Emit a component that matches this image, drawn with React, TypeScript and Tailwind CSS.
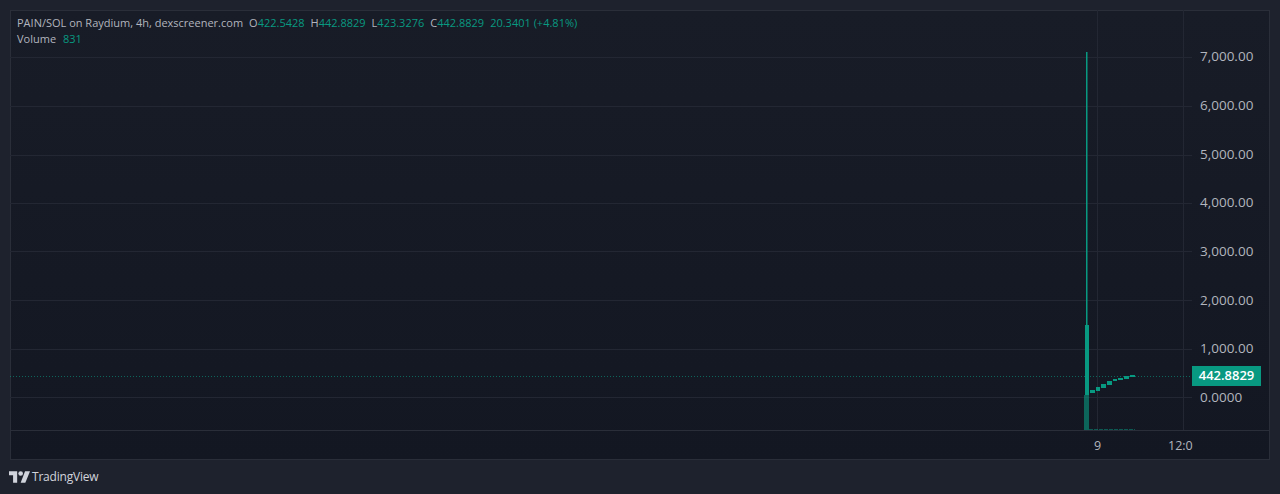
const PRICES = ["7,000.00", "6,000.00", "5,000.00", "4,000.00", "3,000.00", "2,000.00", "1,000.00", "0.0000"];

// y of the horizontal grid lines inside the plot (plot top is 0)
const GRID_Y = [47.5, 96.5, 145.5, 193.5, 241.5, 290.5, 339.5, 387.5];

// small candles to the right of the big one: [x, y, w, h] in plot coords
const CANDLES = [
  [1080, 380, 5, 3],
  [1086, 377, 4, 4],
  [1091, 374, 5, 4],
  [1097, 371, 5, 4],
  [1103, 369, 4, 2],
  [1108, 368, 5, 2],
  [1114, 366, 5, 3],
  [1120, 365, 5, 2],
];

function Plot() {
  return (
    <svg width="1182" height="420" className="block shrink-0">
      {GRID_Y.map((y) => (
        <line key={y} x1="0" x2="1182" y1={y} y2={y} stroke="#232733" />
      ))}
      <line x1="1087.5" x2="1087.5" y1="0" y2="420" stroke="#232733" />
      <line x1="1173.5" x2="1173.5" y1="0" y2="420" stroke="#232733" />
      <line x1="0" x2="1182" y1="366.5" y2="366.5" stroke="#089981" strokeOpacity="0.6" strokeDasharray="1 2" />
      <rect x="1076" y="42" width="1.5" height="280" fill="#089981" />
      <rect x="1075" y="315" width="4" height="70" fill="#089981" />
      <rect x="1074" y="385" width="5" height="35" fill="#089981" fillOpacity="0.6" />
      {CANDLES.map(([x, y, w, h]) => (
        <rect key={x} x={x} y={y} width={w} height={h} fill="#089981" />
      ))}
      <line x1="1079" x2="1125" y1="419.5" y2="419.5" stroke="#089981" strokeOpacity="0.5" strokeDasharray="4 1" />
    </svg>
  );
}

function Legend() {
  const g = "text-[#089981]";
  return (
    <div className="absolute left-[7px] top-[5px] text-[11px] leading-[16px] text-[#b2b5be] whitespace-nowrap font-['Open_Sans',sans-serif]">
      <div>
        PAIN/SOL on Raydium, 4h, dexscreener.com
        <span className="ml-[6px]">O</span><span className={g}>422.5428</span>
        <span className="ml-[6px]">H</span><span className={g}>442.8829</span>
        <span className="ml-[6px]">L</span><span className={g}>423.3276</span>
        <span className="ml-[6px]">C</span><span className={g}>442.8829</span>
        <span className={`ml-[6px] ${g}`}>20.3401 (+4.81%)</span>
      </div>
      <div>
        Volume <span className={`ml-1 ${g}`}>831</span>
      </div>
    </div>
  );
}

export default function App() {
  return (
    <div className="h-[494px] w-[1280px] bg-[#1e222d] flex flex-col font-['Open_Sans',sans-serif] overflow-hidden">
      <div className="mx-[10px] mt-[10px] h-[450px] flex flex-col bg-gradient-to-b from-[#181c27] to-[#131722] outline outline-[#2a2e39] -outline-offset-1">
        <div className="flex h-[420px] border-b border-[#2a2e39] box-content">
          <div className="relative">
            <Plot />
            <Legend />
          </div>
          <div className="relative flex-1 flex flex-col pt-[22px] text-[13.5px] text-[#b2b5be]">
            {PRICES.map((p) => (
              <div key={p} className="h-[48.7px] flex items-center pl-[8px]">{p}</div>
            ))}
            <div className="absolute left-0 top-[356px] h-[20px] w-[69px] bg-[#089981] text-white font-semibold text-[13px] flex items-center justify-center">442.8829</div>
          </div>
        </div>
        <div className="flex flex-1 items-center text-[12.5px] text-[#b2b5be] pt-[1px]">
          <div className="w-[1182px] flex">
            <span className="ml-[1084px] w-[7px]">9</span>
            <span className="ml-[67px] w-[24px] whitespace-nowrap">12:0</span>
          </div>
        </div>
      </div>
      <div className="flex-1 flex items-center pl-[9px] gap-[2px] text-[#d1d4dc]">
        <svg width="21" height="12" viewBox="0 0 36 20" fill="#d1d4dc">
          <path d="M14 20H7V7H0V0h14v20Z" />
          <path d="M28 20h-8l7.5-20H36l-8 20Z" />
          <circle cx="20" cy="4" r="4" />
        </svg>
        <span className="text-[12px] font-medium tracking-[-0.2px]">TradingView</span>
      </div>
    </div>
  );
}
